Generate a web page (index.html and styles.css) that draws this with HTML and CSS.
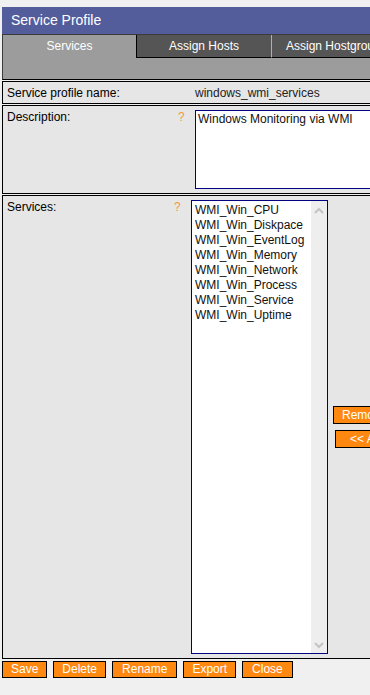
FILE: index.html
```html
<!DOCTYPE html>
<html lang="en">
<head>
	<meta charset="UTF-8">
	<title>Service Profile</title>
	<link rel="stylesheet" href="styles.css">
</head>
<body>
	<div class="page">
		<div class="title">Service Profile</div>

		<div class="tabbar">
			<div class="tabs">
				<div class="tab active">Services</div>
				<div class="tab">Assign Hosts</div>
				<div class="tab sep">Assign Hostgroups</div>
			</div>
		</div>

		<div class="row row-name">
			<div class="label">Service profile name:</div>
			<div class="value">windows_wmi_services</div>
		</div>

		<div class="row row-desc">
			<div class="label">Description:</div>
			<div class="help">?</div>
			<textarea class="desc">Windows Monitoring via WMI</textarea>
		</div>

		<div class="row row-services">
			<div class="label">Services:</div>
			<div class="help">?</div>
			<div class="listbox">
				<ul class="items">
					<li>WMI_Win_CPU</li>
					<li>WMI_Win_Diskpace</li>
					<li>WMI_Win_EventLog</li>
					<li>WMI_Win_Memory</li>
					<li>WMI_Win_Network</li>
					<li>WMI_Win_Process</li>
					<li>WMI_Win_Service</li>
					<li>WMI_Win_Uptime</li>
				</ul>
				<div class="scroll">
					<svg width="16" height="12" viewBox="0 0 16 12"><path d="M4 8 L8 4 L12 8" fill="none" stroke="#c4c4c4" stroke-width="2"/></svg>
					<svg width="16" height="12" viewBox="0 0 16 12"><path d="M4 4 L8 8 L12 4" fill="none" stroke="#c4c4c4" stroke-width="2"/></svg>
				</div>
			</div>
			<div class="moves">
				<button class="btn btn-remove">Remove &gt;&gt;</button>
				<button class="btn btn-add">&lt;&lt; Add</button>
			</div>
		</div>

		<div class="actions">
			<button class="btn">Save</button>
			<button class="btn">Delete</button>
			<button class="btn btn-wide">Rename</button>
			<button class="btn">Export</button>
			<button class="btn btn-wide">Close</button>
		</div>
	</div>
</body>
</html>
```

FILE: styles.css
```css
html,body {
	overflow: hidden;
}
body {
	margin: 0;
	background: #f0f0f0;
	font-family: "Liberation Sans", Arial, sans-serif;
	font-size: 12px;
	color: #000;
}
.page {
	width: 520px;
	margin: 7px 0 0 2px;
}
.title {
	height: 27px;
	line-height: 27px;
	padding-left: 9px;
	background: #535d9c;
	color: #fff;
	font-size: 14px;
}

/* tabs */
.tabbar {
	height: 44px;
	background: #9c9c9c;
	border-top: 1px solid #3a3a3a;
	border-left: 1px solid #3a3a3a;
	border-bottom: 1px solid #000;
}
.tabs {
	display: flex;
}
.tab {
	width: 134px;
	height: 22px;
	line-height: 22px;
	text-align: center;
	color: #fff;
	background: #555;
	border-left: 1px solid #000;
	border-bottom: 1px solid #000;
}
.tab.active {
	width: 133px;
	background: #9c9c9c;
	border: 0;
}
.tab.sep {
	width: 200px;
	text-align: left;
	padding-left: 14px;
	border-left-color: #b0b0b0;
}

/* form rows */
.row {
	display: flex;
	margin-top: 1px;
	background: #e6e6e6;
	border: 1px solid #000;
}
.label {
	padding-left: 4px;
}
.help {
	width: 20px;
	padding-left: 3px;
	box-sizing: border-box;
	color: #f7993a;
	line-height: 15px;
}
.row-name {
	height: 21px;
	line-height: 22px;
}
.row-name .label {
	width: 188px;
}
.value {
	color: #222;
}
.row-desc,
.row-services {
	padding: 4px 0;
}
.row-desc .label,
.row-services .label {
	line-height: 15px;
}
.row-desc .label {
	width: 168px;
}
.row-services .label {
	width: 164px;
}
.desc {
	width: 260px;
	height: 79px;
	box-sizing: border-box;
	margin: 0;
	padding: 1px 2px;
	border: 1px solid #000080;
	font-family: "Liberation Sans", Arial, sans-serif;
	font-size: 12px;
	line-height: 15px;
	color: #111;
	resize: none;
	background: #fff;
}

/* list box */
.listbox {
	display: flex;
	width: 137px;
	height: 454px;
	box-sizing: border-box;
	border: 1px solid #000080;
	background: #fff;
}
.items {
	flex: 1;
	margin: 0;
	padding: 2px 0 0 3px;
	list-style: none;
	line-height: 15px;
	color: #111;
}
.scroll {
	width: 16px;
	background: #eee;
	display: flex;
	flex-direction: column;
	justify-content: space-between;
	padding: 4px 0 2px;
}

/* buttons */
.btn {
	height: 18px;
	margin: 0;
	padding: 0 8px;
	background: #ff8811;
	border: 1px solid #000;
	border-radius: 0;
	color: #fff;
	font-family: "Liberation Sans", Arial, sans-serif;
	font-size: 12px;
	line-height: 16px;
}
.moves {
	display: flex;
	flex-direction: column;
	justify-content: center;
	align-items: flex-start;
	gap: 6px;
	padding-left: 5px;
}
.moves .btn-add {
	margin-left: 2px;
	padding: 0 14px;
}
.actions {
	display: flex;
	gap: 6px;
	margin-top: 2px;
}
.actions .btn {
	height: 17px;
	line-height: 15px;
	padding: 0 8px;
}
.actions .btn-wide {
	padding: 0 9px;
}
```
